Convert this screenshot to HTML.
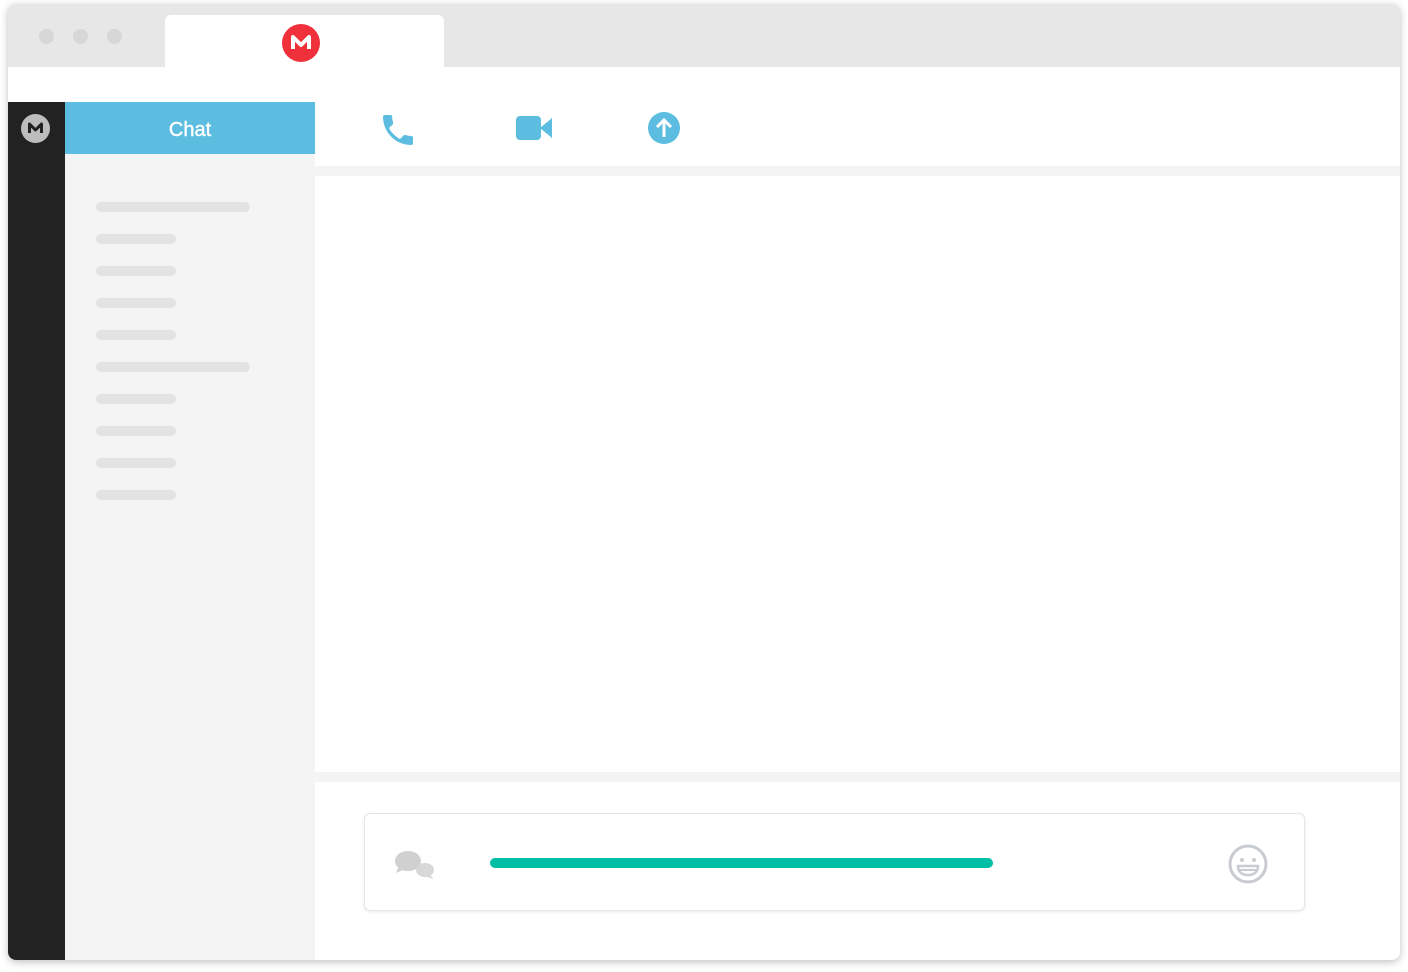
<!DOCTYPE html>
<html><head><style>
body{margin:0;width:1408px;height:972px;background:#fff;position:relative;overflow:hidden;font-family:"Liberation Sans",sans-serif}
.a{position:absolute}
.bar{position:absolute;left:96px;height:10px;border-radius:5px;background:#e3e3e3}
</style></head><body>
<div class="a" style="left:8px;top:4px;width:1392px;height:956px;border-radius:8px;box-shadow:0 2px 8px rgba(0,0,0,.25);overflow:hidden;background:#fff">
 <div class="a" style="left:0;top:0;width:1392px;height:63px;background:#e7e7e7"></div>
 <div class="a" style="left:31px;top:25px;width:15px;height:15px;border-radius:50%;background:#d7d7d7"></div>
 <div class="a" style="left:65px;top:25px;width:15px;height:15px;border-radius:50%;background:#d7d7d7"></div>
 <div class="a" style="left:99px;top:25px;width:15px;height:15px;border-radius:50%;background:#d7d7d7"></div>
 <div class="a" style="left:157px;top:11px;width:279px;height:52px;background:#fff;border-radius:6px 6px 0 0"></div>
 <svg class="a" style="left:274px;top:20px" width="38" height="38" viewBox="0 0 38 38"><circle cx="19" cy="19" r="19" fill="#f0303a"/><path d="M11 25V13l8 8 8-8v12" fill="none" stroke="#fff" stroke-width="4" stroke-linejoin="round"/></svg>
 <div class="a" style="left:0;top:98px;width:57px;height:858px;background:#222"></div>
 <svg class="a" style="left:13px;top:110px" width="29" height="29" viewBox="0 0 29 29"><circle cx="14.5" cy="14.5" r="14.5" fill="#bdbdbd"/><path d="M8.5 19V10l6 6 6-6v9" fill="none" stroke="#222" stroke-width="3" stroke-linejoin="round"/></svg>
 <div class="a" style="left:57px;top:100px;width:250px;height:50px;background:#5dbde0;color:#fff;font-size:20px;text-align:center;line-height:52px;top:98px;height:52px;padding-top:2px;box-sizing:border-box;-webkit-text-stroke:0.4px #fff">Chat</div>
 <div class="a" style="left:57px;top:150px;width:250px;height:806px;background:#f4f4f4"></div>
 <div class="a" style="left:307px;top:162px;width:1085px;height:10px;background:#f4f4f4"></div>
 <div class="a" style="left:307px;top:768px;width:1085px;height:10px;background:#f4f4f4"></div>
 <svg class="a" style="left:370px;top:106px" width="40" height="40" viewBox="0 0 24 24"><path fill="#5dbde0" d="M6.6 10.8c1.4 2.8 3.8 5.1 6.6 6.6l2.2-2.2c.3-.3.7-.4 1-.2 1.1.4 2.3.6 3.6.6.6 0 1 .4 1 1V20c0 .6-.4 1-1 1C10.6 21 3 13.4 3 4c0-.6.4-1 1-1h3.5c.6 0 1 .4 1 1 0 1.3.2 2.5.6 3.6.1.3 0 .7-.2 1z"/></svg>
 <div class="a" style="left:508px;top:112px;width:25px;height:24px;border-radius:4px;background:#5dbde0"></div>
 <svg class="a" style="left:532px;top:114px" width="13" height="20"><path d="M0 10L12 0v20z" fill="#5dbde0"/></svg>
 <svg class="a" style="left:639px;top:107px" width="34" height="34" viewBox="0 0 34 34"><circle cx="17" cy="17" r="16" fill="#5dbde0"/><path d="M17 26V9M10 16l7-7 7 7" fill="none" stroke="#fff" stroke-width="3"/></svg>
 <div class="a" style="left:356px;top:809px;width:939px;height:96px;border:1px solid #e6e6e6;border-radius:6px;box-shadow:0 1px 3px rgba(0,0,0,.08);background:#fff"></div>
 <svg class="a" style="left:386px;top:845px" width="42" height="34" viewBox="0 0 42 34"><ellipse cx="14" cy="12" rx="13" ry="10" fill="#d0d0d0"/><path d="M4 19l-2 5 7-3z" fill="#d0d0d0"/><ellipse cx="31" cy="21" rx="9" ry="7" fill="#d8d8d8"/><path d="M36 26l4 4-7-2z" fill="#d8d8d8"/></svg>
 <div class="a" style="left:482px;top:854px;width:503px;height:10px;border-radius:5px;background:#00bfa5"></div>
 <svg class="a" style="left:1219px;top:839px" width="42" height="42" viewBox="0 0 42 42"><circle cx="21" cy="21" r="18" fill="none" stroke="#c8ccd0" stroke-width="3"/><circle cx="15" cy="17" r="2" fill="#c8ccd0"/><circle cx="27" cy="17" r="2" fill="#c8ccd0"/><path d="M11 23h20c0 6-4 9-10 9s-10-3-10-9z" fill="none" stroke="#c8ccd0" stroke-width="2.5"/><path d="M12 27h18" stroke="#c8ccd0" stroke-width="2"/></svg>
</div>
<div class="bar" style="top:202px;width:154px"></div>
<div class="bar" style="top:234px;width:80px"></div>
<div class="bar" style="top:266px;width:80px"></div>
<div class="bar" style="top:298px;width:80px"></div>
<div class="bar" style="top:330px;width:80px"></div>
<div class="bar" style="top:362px;width:154px"></div>
<div class="bar" style="top:394px;width:80px"></div>
<div class="bar" style="top:426px;width:80px"></div>
<div class="bar" style="top:458px;width:80px"></div>
<div class="bar" style="top:490px;width:80px"></div>
</body></html>
